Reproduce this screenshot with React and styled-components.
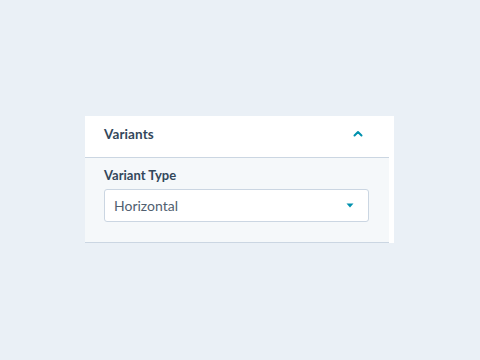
import React from "react";
import styled, { createGlobalStyle } from "styled-components";

const Global = createGlobalStyle`
  html, body { margin: 0; padding: 0; background: #eaf0f6; }
  body { font-family: Lato, "Noto Sans", sans-serif; }
`;

const Page = styled.div`
  width: 480px;
  height: 360px;
  display: flex;
  justify-content: flex-start;
  align-items: flex-start;
  padding: 116px 0 0 85px;
  box-sizing: border-box;
`;

const Card = styled.div`
  width: 309px;
  background: #ffffff;
  display: flex;
  flex-direction: column;
  padding-right: 5px;
  box-sizing: border-box;
`;

const Header = styled.div`
  height: 42px;
  box-sizing: border-box;
  display: flex;
  align-items: center;
  justify-content: space-between;
  padding: 0 26px 6px 19px;
  border-bottom: 1px solid #cbd6e2;
`;

const Title = styled.span`
  font-size: 13.5px;
  font-weight: 700;
  color: #33475b;
  letter-spacing: 0.1px;
`;

const Body = styled.div`
  background: #f5f8fa;
  padding: 9px 20px 20px 19px;
  border-bottom: 1px solid #cbd6e2;
  display: flex;
  flex-direction: column;
  gap: 6px;
`;

const Label = styled.label`
  font-size: 13px;
  font-weight: 700;
  color: #33475b;
  line-height: 16px;
`;

const Select = styled.div`
  height: 33px;
  box-sizing: border-box;
  background: #ffffff;
  border: 1px solid #cbd6e2;
  border-radius: 3px;
  display: flex;
  align-items: center;
  justify-content: space-between;
  padding: 0 14px 0 9px;
`;

const Value = styled.span`
  font-size: 14px;
  color: #516070;
`;

export default function App() {
  return (
    <>
      <Global />
      <Page>
        <Card>
          <Header>
            <Title>Variants</Title>
            <svg width="10" height="7" viewBox="0 0 10 7">
              <path d="M1.5 5.5 L5 2 L8.5 5.5" fill="none" stroke="#0091ae" strokeWidth="2" strokeLinecap="round" strokeLinejoin="round" />
            </svg>
          </Header>
          <Body>
            <Label>Variant Type</Label>
            <Select>
              <Value>Horizontal</Value>
              <svg width="8" height="5" viewBox="0 0 8 5">
                <path d="M0.5 0.5 L7.5 0.5 L4 4.5 Z" fill="#0091ae" />
              </svg>
            </Select>
          </Body>
        </Card>
      </Page>
    </>
  );
}
